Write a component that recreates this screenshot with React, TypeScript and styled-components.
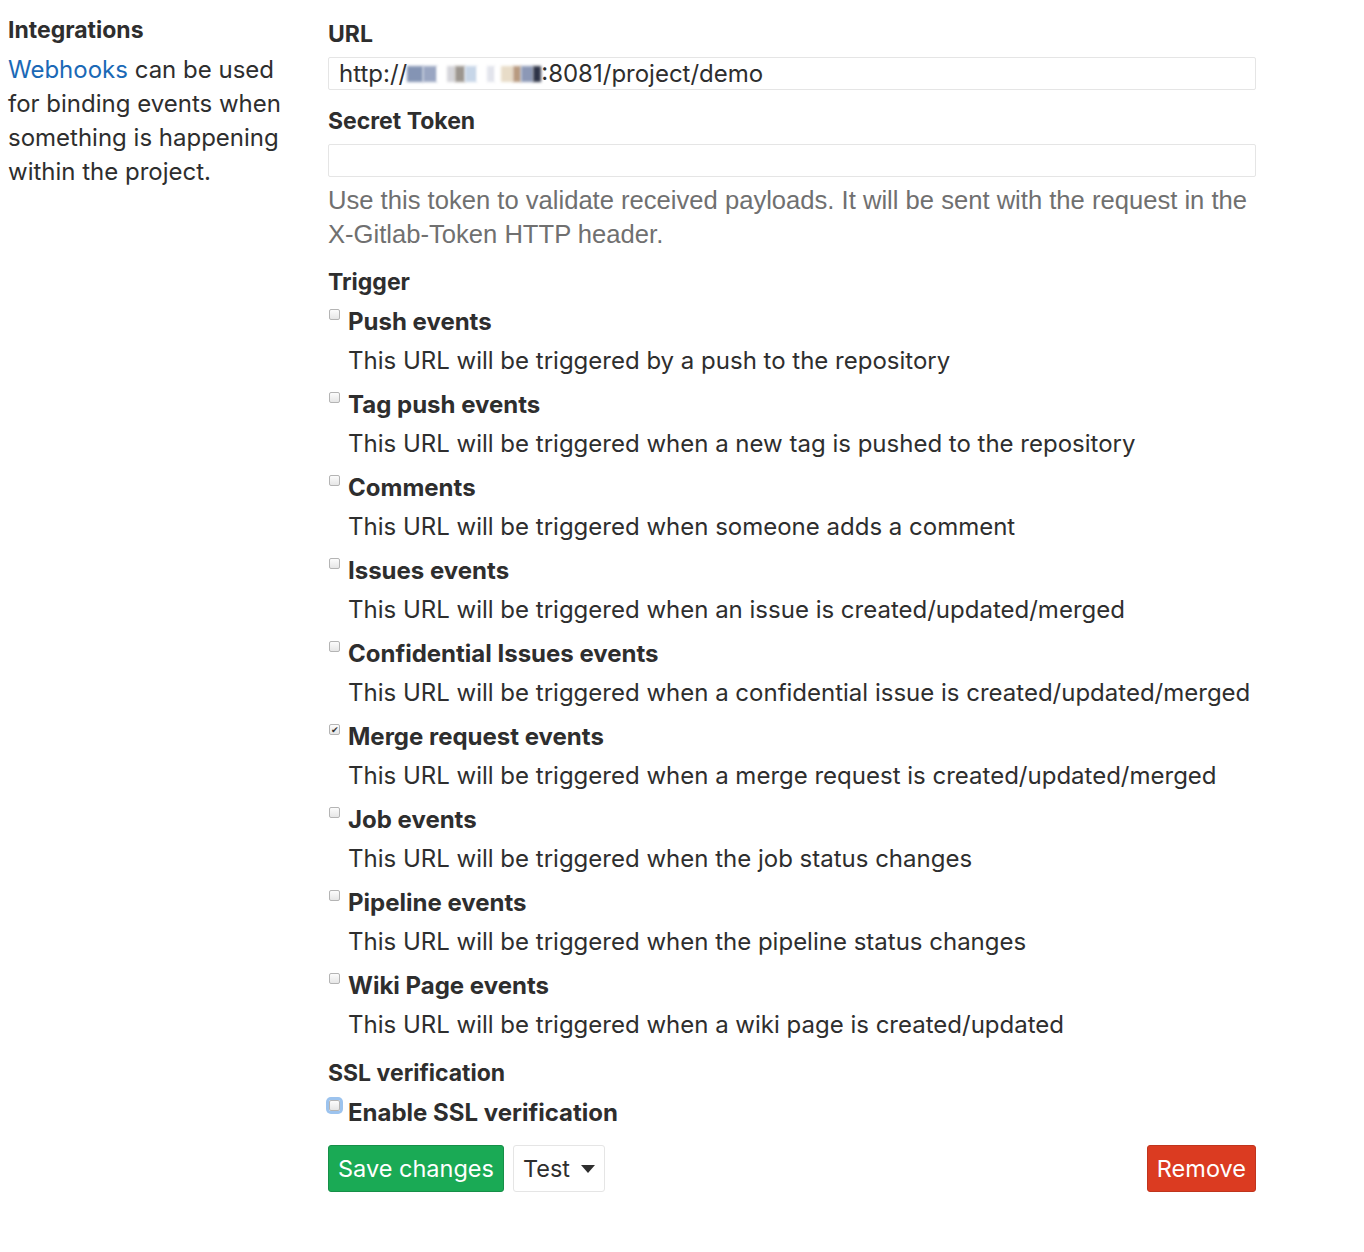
import React from 'react';
import styled, {createGlobalStyle} from 'styled-components';

const GlobalStyle = createGlobalStyle`
    body {
        margin: 0;
        background: #fff;
        font-family: Inter, "Liberation Sans", Arial, sans-serif;
        color: #2e2e2e;
    }
`;

const Page = styled.div`
    display: flex;
    align-items: flex-start;
    padding: 13px 8px 40px 8px;
`;

const Sidebar = styled.div`
    width: 282px;
    flex-shrink: 0;
    margin-right: 38px;
`;

const SideTitle = styled.h4`
    margin: 0 0 6px 0;
    font-size: 23px;
    line-height: 34px;
    font-weight: 700;
`;

const SideText = styled.p`
    margin: 0;
    font-size: 24px;
    line-height: 34px;
`;

const Link = styled.a`
    color: #1b69b6;
    text-decoration: none;
`;

const Main = styled.div`
    width: 928px;
`;

const FieldLabel = styled.div<{$top?: number}>`
    font-size: 23px;
    font-weight: 700;
    line-height: 34px;
    margin-top: ${p => p.$top ?? 0}px;
    margin-bottom: 6px;
`;

const TextInput = styled.div`
    box-sizing: border-box;
    height: 33px;
    border: 1px solid #e5e5e5;
    border-radius: 2px;
    padding: 0 10px;
    display: flex;
    align-items: center;
    font-size: 24px;
    color: #2e2e2e;
`;

const Blur = styled.span<{$c: string; $w: number}>`
    display: inline-block;
    width: ${p => p.$w}px;
    height: 16px;
    background: ${p => p.$c};
    filter: blur(1.5px);
    vertical-align: middle;
`;

const Help = styled.p`
    margin: 6px 0 0 0;
    font-family: "Liberation Sans", Arial, sans-serif;
    font-size: 25.6px;
    line-height: 34px;
    color: #707070;
`;

const Item = styled.div`
    margin-bottom: 10px;
`;

const CheckRow = styled.div`
    display: flex;
    align-items: flex-start;
    margin-bottom: 5px;
`;

const Box = styled.span<{$focus?: boolean}>`
    box-sizing: border-box;
    width: 11px;
    height: 11px;
    margin: 4px 8px 0 1px;
    border: 1px solid #b4b4b4;
    border-radius: 2px;
    background: linear-gradient(#fcfcfc, #e6e6e6);
    flex-shrink: 0;
    box-shadow: ${p => (p.$focus ? '0 0 0 3px #9cc3ee' : 'none')};
    font-size: 9px;
    line-height: 9px;
    text-align: center;
    color: #333;
`;

const CheckLabel = styled.span`
    font-size: 24px;
    font-weight: 700;
    line-height: 34px;
`;

const Desc = styled.div`
    margin-left: 20px;
    font-size: 24px;
    line-height: 34px;
`;

const Actions = styled.div`
    display: flex;
    align-items: center;
    gap: 9px;
    margin-top: 15px;
`;

const Button = styled.button<{$variant: 'save' | 'default' | 'remove'}>`
    height: 47px;
    padding: 0 9px;
    border-radius: 3px;
    font-family: Inter, "Liberation Sans", Arial, sans-serif;
    font-size: 23.5px;
    display: inline-flex;
    align-items: center;
    gap: 11px;
    cursor: pointer;
    border: 1px solid
        ${p => (p.$variant === 'save' ? '#168f48' : p.$variant === 'remove' ? '#c0341d' : '#e5e5e5')};
    background: ${p => (p.$variant === 'save' ? '#1aaa55' : p.$variant === 'remove' ? '#db3b21' : '#fff')};
    color: ${p => (p.$variant === 'default' ? '#2e2e2e' : '#fff')};
    margin-left: ${p => (p.$variant === 'remove' ? 'auto' : '0')};
`;

const triggers = [
    {label: 'Push events', desc: 'This URL will be triggered by a push to the repository'},
    {label: 'Tag push events', desc: 'This URL will be triggered when a new tag is pushed to the repository'},
    {label: 'Comments', desc: 'This URL will be triggered when someone adds a comment'},
    {label: 'Issues events', desc: 'This URL will be triggered when an issue is created/updated/merged'},
    {
        label: 'Confidential Issues events',
        desc: 'This URL will be triggered when a confidential issue is created/updated/merged',
    },
    {
        label: 'Merge request events',
        desc: 'This URL will be triggered when a merge request is created/updated/merged',
        checked: true,
    },
    {label: 'Job events', desc: 'This URL will be triggered when the job status changes'},
    {label: 'Pipeline events', desc: 'This URL will be triggered when the pipeline status changes'},
    {label: 'Wiki Page events', desc: 'This URL will be triggered when a wiki page is created/updated'},
];

const blurred = [
    {c: '#8494b4', w: 16},
    {c: '#9aa6c2', w: 14},
    {c: '#fff', w: 10},
    {c: '#d5d5da', w: 8},
    {c: '#9c968f', w: 10},
    {c: '#c7d6e8', w: 12},
    {c: '#fff', w: 10},
    {c: '#e2e4ec', w: 8},
    {c: '#fff', w: 6},
    {c: '#e8dcc8', w: 12},
    {c: '#b89a80', w: 8},
    {c: '#8c98b6', w: 12},
    {c: '#2e3448', w: 8},
];

const Caret = () => (
    <svg width="14" height="8" viewBox="0 0 14 8">
        <path d="M0 0h14L7 8z" fill="#2e2e2e" />
    </svg>
);

export default function App() {
    return (
        <>
            <GlobalStyle />
            <Page>
                <Sidebar>
                    <SideTitle>Integrations</SideTitle>
                    <SideText>
                        <Link href="#">Webhooks</Link> can be used for binding events when something is
                        happening within the project.
                    </SideText>
                </Sidebar>
                <Main>
                    <FieldLabel $top={4}>URL</FieldLabel>
                    <TextInput>
                        http://
                        {blurred.map((b, i) => (
                            <Blur key={i} $c={b.c} $w={b.w} />
                        ))}
                        :8081/project/demo
                    </TextInput>
                    <FieldLabel $top={14}>Secret Token</FieldLabel>
                    <TextInput />
                    <Help>
                        Use this token to validate received payloads. It will be sent with the request in the
                        X-Gitlab-Token HTTP header.
                    </Help>
                    <FieldLabel $top={14}>Trigger</FieldLabel>
                    {triggers.map(t => (
                        <Item key={t.label}>
                            <CheckRow>
                                <Box>{t.checked ? '✔' : ''}</Box>
                                <CheckLabel>{t.label}</CheckLabel>
                            </CheckRow>
                            <Desc>{t.desc}</Desc>
                        </Item>
                    ))}
                    <FieldLabel $top={14}>SSL verification</FieldLabel>
                    <CheckRow>
                        <Box $focus />
                        <CheckLabel>Enable SSL verification</CheckLabel>
                    </CheckRow>
                    <Actions>
                        <Button $variant="save">Save changes</Button>
                        <Button $variant="default">
                            Test <Caret />
                        </Button>
                        <Button $variant="remove">Remove</Button>
                    </Actions>
                </Main>
            </Page>
        </>
    );
}
